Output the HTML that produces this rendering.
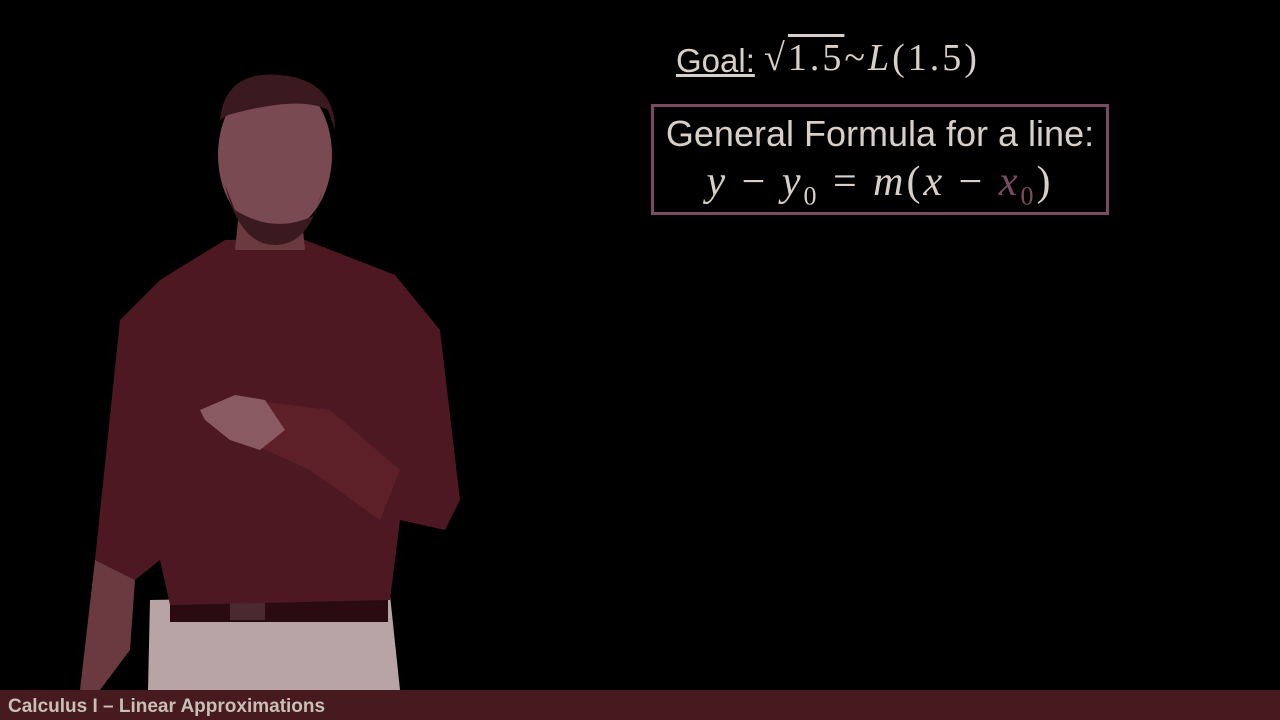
<!DOCTYPE html>
<html><head><style>
html,body{margin:0;padding:0;background:#000;width:1280px;height:720px;overflow:hidden;position:relative;font-family:"Liberation Sans",sans-serif}
.t{position:absolute;color:#d8d0c8;white-space:nowrap}
.m{font-family:"Liberation Serif",serif}
</style></head><body>
<svg width="1280" height="720" style="position:absolute;left:0;top:0">
 <path d="M150 600 L390 595 L400 690 L148 690 Z" fill="#b8a4a4"/>
 <rect x="170" y="596" width="218" height="26" fill="#2a0c10"/>
 <rect x="230" y="598" width="35" height="22" fill="#4a2a2e"/>
 <path d="M225 240 L300 238 L395 275 L440 330 L460 500 L445 530 L400 520 L390 600 L170 605 L160 560 L135 580 L95 560 L120 320 L160 280 Z" fill="#4e1822"/>
 <path d="M95 560 L135 580 L130 650 L100 690 L80 690 Z" fill="#6a3a40"/>
 <path d="M250 400 L330 410 L400 470 L380 520 L310 470 L255 445 Z" fill="#5e2028"/>
 <path d="M200 410 L235 395 L265 400 L285 430 L260 450 L230 440 L205 420 Z" fill="#8a5a62"/>
 <path d="M240 200 L300 200 L305 250 L235 250 Z" fill="#6a3a40"/>
 <ellipse cx="275" cy="155" rx="57" ry="78" fill="#7a4a52"/>
 <path d="M220 120 Q225 70 280 75 Q335 80 335 130 L328 110 Q300 95 228 115 Z" fill="#3a1a1e"/>
 <path d="M225 185 Q240 245 275 245 Q310 245 322 190 L315 215 Q275 235 235 210 Z" fill="#3a1a1e"/>
</svg>
<div class="t" style="left:676px;top:38px;font-size:33px"><span style="text-decoration:underline">Goal:</span> <span class="m" style="font-size:38px;position:relative;top:-2px;letter-spacing:3px">√<span style="text-decoration:overline">1.5</span>~<i>L</i>(1.5)</span></div>
<div style="position:absolute;left:651px;top:104px;width:452px;height:105px;border:3px solid #7a4c62"></div>
<div class="t" style="left:651px;top:113px;width:458px;text-align:center;font-size:36px">General Formula for a line:</div>
<div class="t m" style="left:651px;top:158px;width:458px;text-align:center;font-size:42px;letter-spacing:3px"><i>y</i> − <i>y</i><sub style="font-size:26px">0</sub> = <i>m</i>(<i>x</i> − <i style="color:#7a4c62">x</i><sub style="font-size:26px;color:#7a4c62">0</sub>)</div>
<div style="position:absolute;left:0;top:690px;width:1280px;height:30px;background:#471a20"></div>
<div class="t" style="left:8px;top:696px;font-size:19px;font-weight:bold;color:#c8c0b4">Calculus I – Linear Approximations</div>
</body></html>
